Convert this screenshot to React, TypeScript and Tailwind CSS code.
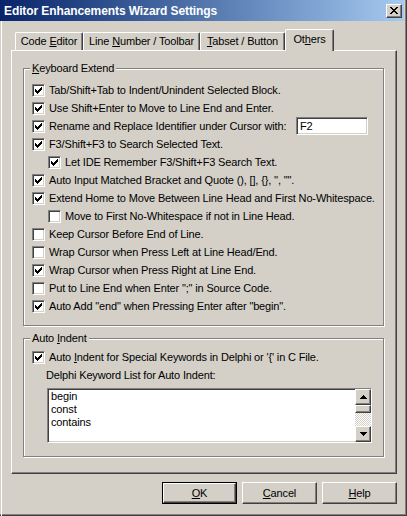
import React from "react";

const sunken =
  "border border-t-[#808080] border-l-[#808080] border-b-white border-r-white shadow-[inset_1px_1px_0_#404040,inset_-1px_-1px_0_#d4d0c8]";
const raised =
  "border border-t-white border-l-white border-b-[#404040] border-r-[#404040] shadow-[inset_-1px_-1px_0_#808080]";

interface Row {
  label: React.ReactNode;
  checked: boolean;
  indent?: boolean;
  input?: string;
}

const keyboardRows: Row[] = [
  { label: "Tab/Shift+Tab to Indent/Unindent Selected Block.", checked: true },
  { label: "Use Shift+Enter to Move to Line End and Enter.", checked: true },
  { label: "Rename and Replace Identifier under Cursor with:", checked: true, input: "F2" },
  { label: "F3/Shift+F3 to Search Selected Text.", checked: true },
  { label: "Let IDE Remember F3/Shift+F3 Search Text.", checked: true, indent: true },
  { label: "Auto Input Matched Bracket and Quote (), [], {}, '', \"\".", checked: true },
  { label: "Extend Home to Move Between Line Head and First No-Whitespace.", checked: true },
  { label: "Move to First No-Whitespace if not in Line Head.", checked: false, indent: true },
  { label: "Keep Cursor Before End of Line.", checked: false },
  { label: "Wrap Cursor when Press Left at Line Head/End.", checked: false },
  { label: "Wrap Cursor when Press Right at Line End.", checked: true },
  { label: "Put to Line End when Enter \";\" in Source Code.", checked: false },
  { label: "Auto Add \"end\" when Pressing Enter after \"begin\".", checked: true },
];

function CheckBox({ checked }: { checked: boolean }) {
  const tops = [2, 3, 4, 3, 2, 1, 0];
  return (
    <span className={`relative block w-[13px] h-[13px] shrink-0 bg-white ${sunken}`}>
      {checked && (
        <svg width="13" height="13" viewBox="0 0 13 13" className="absolute -left-px -top-px" shapeRendering="crispEdges">
          {tops.map((t, i) => (
            <rect key={i} x={3 + i} y={3 + t} width="1" height="3" fill="#000" />
          ))}
        </svg>
      )}
    </span>
  );
}

function GroupBox({ title, className, children }: { title: React.ReactNode; className: string; children: React.ReactNode }) {
  return (
    <div className={`relative border border-[#808080] shadow-[inset_1px_1px_0_#fff,1px_1px_0_#fff] ${className}`}>
      <span className="absolute left-[6px] -top-[8px] bg-[#d4d0c8] px-[2px] leading-[14px]">{title}</span>
      {children}
    </div>
  );
}

function Arrow({ up }: { up?: boolean }) {
  return (
    <svg width="7" height="4" viewBox="0 0 7 4" shapeRendering="crispEdges">
      {up ? (
        <path d="M3 0h1v1h1v1h1v1h1v1H0V3h1V2h1V1h1z" fill="#000" />
      ) : (
        <path d="M0 0h7v1H6v1H5v1H4v1H3V3H2V2H1V1H0z" fill="#000" />
      )}
    </svg>
  );
}

function Tab({ children, w, active }: { children: React.ReactNode; w: string; active?: boolean }) {
  return (
    <div
      className={`flex items-center justify-center border-t border-l border-white border-r border-r-[#404040] rounded-tl-[2px] rounded-tr-[2px] shadow-[inset_-1px_0_0_#808080] bg-[#d4d0c8] ${w} ${
        active ? "h-[22px] -mb-px relative z-10 pb-[3px]" : "h-[18px]"
      }`}
    >
      <span className="whitespace-pre">{children}</span>
    </div>
  );
}

function Button({ children, def }: { children: React.ReactNode; def?: boolean }) {
  return (
    <div className={`w-[75px] h-[22px] ${def ? "border border-black" : ""}`}>
      <div className={`w-full h-full flex items-center justify-center ${raised}`}>
        <span>{children}</span>
      </div>
    </div>
  );
}

export default function App() {
  return (
    <div
      className="w-[407px] h-[516px] bg-[#d4d0c8] flex flex-col text-[11px] tracking-[-0.15px] text-black shadow-[inset_-1px_-1px_0_#404040,inset_-2px_-2px_0_#808080] overflow-hidden"
      style={{ fontFamily: '"Liberation Sans", Arial, sans-serif' }}
    >
      <div className="w-[404px] h-[21px] shrink-0 flex items-center justify-between pl-[4px] pr-[2px] bg-gradient-to-r from-[#0a246a] to-[#a6caf0]">
        <span className="text-white font-bold text-[12px] tracking-[-0.1px]">Editor Enhancements Wizard Settings</span>
        <div className={`w-[16px] h-[14px] flex items-center justify-center bg-[#d4d0c8] ${raised}`}>
          <svg width="8" height="7" viewBox="0 0 8 7" shapeRendering="crispEdges">
            <path d="M0 0h2v1h1v1h2V1h1V0h2v1H7v1H6v1H5v1h1v1h1v1h1v1H6V6H5V5H3v1H2v1H0V6h1V5h1V4h1V3H2V2H1V1H0z" fill="#000" />
          </svg>
        </div>
      </div>

      <div className="flex-1 flex flex-col ml-px border-l border-white">
        <div className="flex items-end h-[22px] mt-[7px] ml-[11px] pl-[2px]">
          <Tab w="w-[68px]">
            Code <span className="underline">E</span>ditor
          </Tab>
          <Tab w="w-[117px]">
            Line <span className="underline">N</span>umber / Toolbar
          </Tab>
          <Tab w="w-[85px]">
            <span className="underline">T</span>abset / Button
          </Tab>
          <Tab w="w-[49px]" active>
            Ot<span className="underline">h</span>ers
          </Tab>
        </div>

        <div className="ml-[9px] w-[386px] h-[424px] border-t border-l border-white border-r border-b border-r-[#404040] border-b-[#404040] shadow-[inset_-1px_-1px_0_#808080] flex flex-col">
          <GroupBox
            className="ml-[11px] mt-[17px] w-[361px] h-[258px] pt-[12px] pl-[8px]"
            title={
              <>
                <span className="underline">K</span>eyboard Extend
              </>
            }
          >
            {keyboardRows.map((r, i) => (
              <div key={i} className={`flex items-center h-[18px] gap-[4px] ${r.indent ? "pl-[16px]" : ""}`}>
                <CheckBox checked={r.checked} />
                <span className="whitespace-nowrap">{r.label}</span>
                {r.input && (
                  <div className={`ml-auto mr-[15px] w-[72px] h-[18px] bg-white flex items-center pl-[3px] ${sunken}`}>
                    {r.input}
                  </div>
                )}
              </div>
            ))}
          </GroupBox>

          <GroupBox
            className="ml-[11px] mt-[12px] w-[361px] h-[119px] pt-[9px] pl-[8px]"
            title={
              <>
                Auto <span className="underline">I</span>ndent
              </>
            }
          >
            <div className="flex items-center h-[18px] gap-[4px]">
              <CheckBox checked />
              <span className="whitespace-nowrap">
                Auto <span className="underline">I</span>ndent for Special Keywords in Delphi or '{"{"}' in C File.
              </span>
            </div>
            <div className="h-[14px] mt-[2px] pl-[14px] leading-[14px]">Delphi Keyword List for Auto Indent:</div>
            <div className={`ml-[15px] mt-[6px] w-[325px] h-[55px] bg-white flex ${sunken}`}>
              <div className="flex-1 pl-[3px] pt-px leading-[13px]">
                <div>begin</div>
                <div>const</div>
                <div>contains</div>
              </div>
              <div className="w-[16px] flex flex-col">
                <div className={`h-[16px] flex items-center justify-center bg-[#d4d0c8] ${raised}`}>
                  <Arrow up />
                </div>
                <div className={`h-[8px] bg-[#d4d0c8] ${raised}`} />
                <div className="flex-1 bg-[image:repeating-conic-gradient(#fff_0_25%,#d4d0c8_0_50%)] bg-[length:2px_2px]" />
                <div className={`h-[16px] flex items-center justify-center bg-[#d4d0c8] ${raised}`}>
                  <Arrow />
                </div>
              </div>
            </div>
          </GroupBox>
        </div>

        <div className="flex justify-end gap-[5px] mt-[8px] w-[395px]">
          <Button def>
            <span className="underline">O</span>K
          </Button>
          <Button>
            <span className="underline">C</span>ancel
          </Button>
          <Button>
            <span className="underline">H</span>elp
          </Button>
        </div>
      </div>
    </div>
  );
}
